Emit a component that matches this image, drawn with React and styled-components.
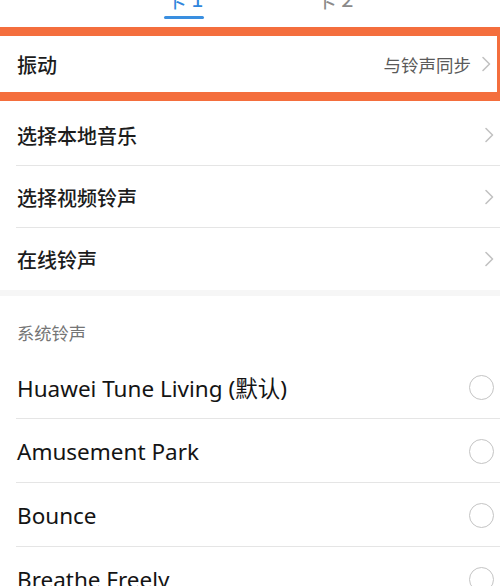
import styled, { createGlobalStyle } from "styled-components"

const GlobalStyle = createGlobalStyle`
    body {
        margin: 0;
        background: #fff;
        font-family: "Noto Sans", "Noto Sans CJK SC", sans-serif;
        color: #1a1a1a;
        overflow: hidden;
    }
`

const Chevron = () => (
    <svg width="10" height="16" viewBox="0 0 10 16">
        <polyline points="2,1.5 8.5,8 2,14.5" fill="none" stroke="#c2c2c2" strokeWidth="1.6" strokeLinecap="round" strokeLinejoin="round" />
    </svg>
)

const topLinks = ["选择本地音乐", "选择视频铃声", "在线铃声"]
const tones = ["Huawei Tune Living (默认)", "Amusement Park", "Bounce", "Breathe Freely"]

const App = () => {
    return (
        <Page>
            <GlobalStyle />
            <TabBar>
                <Tab active>卡 1</Tab>
                <Tab>卡 2</Tab>
            </TabBar>

            <Highlight>
                <Row height="56px">
                    <Label>振动</Label>
                    <Right>
                        <Value>与铃声同步</Value>
                        <Chevron />
                    </Right>
                </Row>
            </Highlight>

            <Group>
                {topLinks.map((t, i) => (
                    <Row key={t} height="62px" divider={i < topLinks.length - 1}>
                        <Label>{t}</Label>
                        <Right>
                            <Chevron />
                        </Right>
                    </Row>
                ))}
            </Group>

            <Gap />

            <SectionTitle>系统铃声</SectionTitle>
            {tones.map((t, i) => (
                <Row key={t} height="64px" divider={i < tones.length - 1}>
                    <ToneName>{t}</ToneName>
                    <Radio />
                </Row>
            ))}
        </Page>
    )
}
export default App

const Page = styled.div`
    width: 500px;
    height: 586px;
    overflow: hidden;
`
const TabBar = styled.div`
    display: flex;
    gap: 50px;
    padding-left: 134px;
    height: 27px;
`
const Tab = styled.div`
    position: relative;
    width: 100px;
    text-align: center;
    font-family: "Noto Sans CJK SC", sans-serif;
    font-size: 22px;
    line-height: 22px;
    margin-top: -14px;
    height: 22px;
    color: ${p => p.active ? "#2f86dc" : "#8a8a8a"};

    &::after {
        content: "";
        display: ${p => p.active ? "block" : "none"};
        position: absolute;
        left: 30px;
        top: 30px;
        width: 40px;
        height: 3px;
        border-radius: 2px;
        background: #3a8fe0;
    }
`
const Highlight = styled.div`
    border-top: 9px solid #f46e3d;
    border-bottom: 9px solid #f46e3d;
    border-right: 3px solid #f46e3d;
`
const Group = styled.div`
    padding-top: 3px;
`
const Row = styled.div`
    display: flex;
    align-items: center;
    justify-content: space-between;
    height: ${p => p.height};
    padding: 0 6px 0 17px;
    position: relative;

    &::after {
        content: "";
        display: ${p => p.divider ? "block" : "none"};
        position: absolute;
        left: 16px;
        right: 0;
        bottom: 0;
        height: 1px;
        background: #e5e5e5;
    }
`
const Label = styled.span`
    font-family: "Noto Sans CJK SC", sans-serif;
    font-size: 20px;
    font-weight: 500;
    color: #1c1c1c;
`
const Right = styled.div`
    display: flex;
    align-items: center;
    gap: 8px;
`
const Value = styled.span`
    font-family: "Noto Sans CJK SC", sans-serif;
    font-size: 17.5px;
    color: #5a5a5a;
    margin-right: 2px;
`
const Gap = styled.div`
    height: 6px;
    background: #f6f6f6;
`
const SectionTitle = styled.div`
    height: 59px;
    box-sizing: border-box;
    padding: 25px 0 0 17px;
    line-height: 24px;
    font-family: "Noto Sans CJK SC", sans-serif;
    font-size: 17.3px;
    color: #757575;
`
const ToneName = styled.span`
    font-family: "Noto Sans", "Noto Sans CJK SC", sans-serif;
    font-size: 22.5px;
    color: #141414;
`
const Radio = styled.span`
    width: 23px;
    height: 23px;
    border-radius: 50%;
    border: 1.6px solid #c4c4c4;
`
